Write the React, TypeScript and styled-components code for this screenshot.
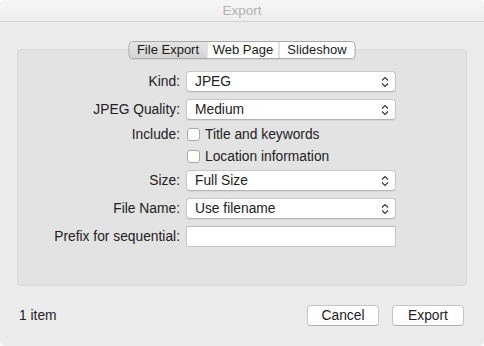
import React from "react";
import styled, { createGlobalStyle } from "styled-components";

const GlobalStyle = createGlobalStyle`
  html, body {
    margin: 0;
    padding: 0;
    background: #ffffff;
  }
  body {
    font-family: "Liberation Sans", Arial, sans-serif;
    font-size: 13.8px;
    color: #222;
  }
`;

const Window = styled.div`
  width: 484px;
  height: 346px;
  background: #ececec;
  border-radius: 5px;
  overflow: hidden;
  display: flex;
  flex-direction: column;
`;

const TitleBar = styled.div`
  height: 21px;
  border-bottom: 1px solid #d2d2d2;
  background: linear-gradient(#f6f6f6, #eeeeee);
  display: flex;
  align-items: center;
  justify-content: center;
  color: #b4b4b4;
  font-size: 13.5px;
`;

const Body = styled.div`
  flex: 1;
  display: flex;
  flex-direction: column;
  padding: 0 17px;
`;

const GroupWrap = styled.div`
  position: relative;
  margin-top: 27px;
`;

const Group = styled.div`
  height: 237px;
  background: #e3e3e3;
  border: 1px solid #d9d9d9;
  border-radius: 4px;
  box-sizing: border-box;
  padding-top: 21px;
`;

const Tabs = styled.div`
  position: absolute;
  top: -8px;
  left: 50%;
  transform: translateX(-50%);
  display: flex;
  border: 1px solid #a9a9a9;
  border-radius: 4px;
  overflow: hidden;
  box-shadow: 0 1px 0 rgba(0, 0, 0, 0.06);
`;

const Tab = styled.div<{ $width: number; $active?: boolean }>`
  width: ${(p) => p.$width}px;
  height: 16px;
  line-height: 16px;
  text-align: center;
  white-space: nowrap;
  font-size: 13px;
  color: #1a1a1a;
  background: ${(p) =>
    p.$active ? "linear-gradient(#e4e4e4, #d4d4d4)" : "#ffffff"};
  & + & {
    border-left: 1px solid #c8c8c8;
  }
  &:nth-child(2) {
    border-left: none;
  }
`;

const Form = styled.div`
  display: grid;
  grid-template-columns: 162px 210px;
  column-gap: 6px;
  row-gap: 7px;
  align-items: center;
`;

const Label = styled.div`
  text-align: right;
  white-space: nowrap;
  color: #222;
`;

const Popup = styled.div`
  height: 21px;
  box-sizing: border-box;
  background: #ffffff;
  border: 1px solid #c6c6c6;
  border-bottom-color: #b4b4b4;
  border-radius: 4px;
  display: flex;
  align-items: center;
  justify-content: space-between;
  padding: 0 6px 0 8px;
  box-shadow: 0 1px 0 rgba(0, 0, 0, 0.05);
`;

const TextField = styled.div`
  height: 21px;
  box-sizing: border-box;
  background: #ffffff;
  border: 1px solid #c9c9c9;
  border-top-color: #bdbdbd;
`;

const CheckRow = styled.label`
  height: 14px;
  display: flex;
  align-items: center;
  gap: 5px;
  padding-left: 1px;
  white-space: nowrap;
`;

const Box = styled.span`
  width: 13px;
  height: 13px;
  box-sizing: border-box;
  background: #ffffff;
  border: 1px solid #a8a8a8;
  border-radius: 3px;
`;

const Footer = styled.div`
  flex: 1;
  display: flex;
  align-items: center;
  justify-content: space-between;
  padding: 0 3px 2px 2px;
`;

const Count = styled.span`
  color: #222;
`;

const Buttons = styled.div`
  display: flex;
  gap: 13px;
`;

const Button = styled.button`
  width: 72px;
  height: 21px;
  background: #ffffff;
  border: 1px solid #c6c6c6;
  border-bottom-color: #b0b0b0;
  border-radius: 4px;
  font-family: "Liberation Sans", Arial, sans-serif;
  font-size: 13.8px;
  color: #222;
  padding: 0;
`;

const Arrows = () => (
  <svg width="8" height="12" viewBox="0 0 8 12">
    <path
      d="M1 4.5 L4 1.5 L7 4.5 M1 7.5 L4 10.5 L7 7.5"
      fill="none"
      stroke="#333"
      strokeWidth="1.1"
    />
  </svg>
);

const PopupField: React.FC<{ value: string }> = ({ value }) => (
  <Popup>
    <span>{value}</span>
    <Arrows />
  </Popup>
);

export default function App() {
  return (
    <>
      <GlobalStyle />
      <Window>
        <TitleBar>Export</TitleBar>
        <Body>
          <GroupWrap>
            <Tabs>
              <Tab $width={77} $active>
                File Export
              </Tab>
              <Tab $width={71}>Web Page</Tab>
              <Tab $width={75}>Slideshow</Tab>
            </Tabs>
            <Group>
              <Form>
                <Label>Kind:</Label>
                <PopupField value="JPEG" />
                <Label>JPEG Quality:</Label>
                <PopupField value="Medium" />
                <Label>Include:</Label>
                <CheckRow>
                  <Box />
                  Title and keywords
                </CheckRow>
                <span />
                <CheckRow>
                  <Box />
                  Location information
                </CheckRow>
                <Label>Size:</Label>
                <PopupField value="Full Size" />
                <Label>File Name:</Label>
                <PopupField value="Use filename" />
                <Label>Prefix for sequential:</Label>
                <TextField />
              </Form>
            </Group>
          </GroupWrap>
          <Footer>
            <Count>1 item</Count>
            <Buttons>
              <Button>Cancel</Button>
              <Button>Export</Button>
            </Buttons>
          </Footer>
        </Body>
      </Window>
    </>
  );
}
